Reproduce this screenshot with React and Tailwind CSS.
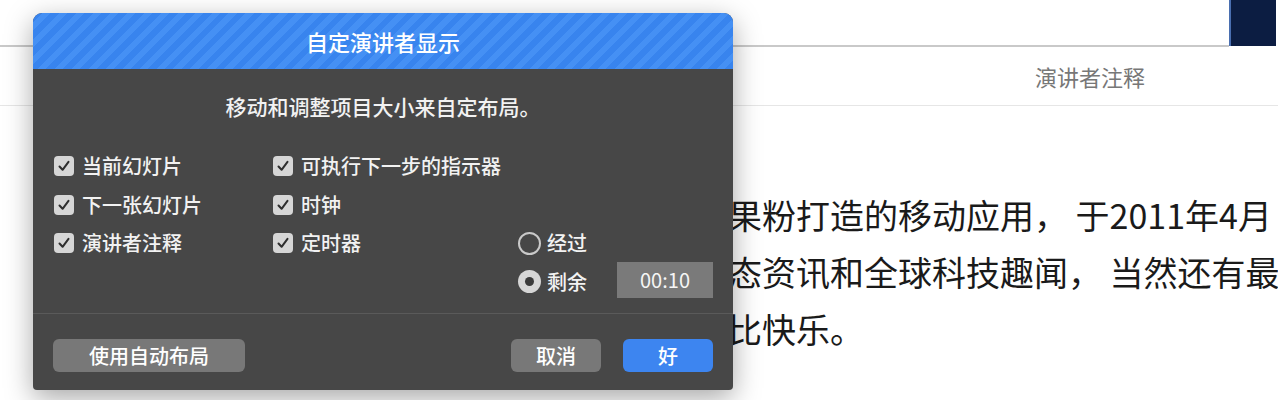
import React from 'react';

const font = { fontFamily: '"Noto Sans CJK SC", "Noto Sans", sans-serif' };

const CheckBox = ({ label }) => (
  <div className="flex items-center gap-[8px]">
    <span className="w-[20px] h-[20px] rounded-[4px] bg-[#d6d6d6] flex items-center justify-center">
      <svg width="14" height="14" viewBox="0 0 14 14">
        <path d="M2.5 7.5 L5.6 10.8 L11.5 2.8" fill="none" stroke="#2e2e2e" strokeWidth="2" strokeLinecap="round" strokeLinejoin="round" />
      </svg>
    </span>
    <span className="text-[20px] font-medium text-[#f2f2f2]">{label}</span>
  </div>
);

const Radio = ({ label, checked }) => (
  <div className="flex items-center gap-[6px]">
    {checked ? (
      <span className="w-[23px] h-[23px] rounded-full bg-[#d6d6d6] flex items-center justify-center">
        <span className="w-[9px] h-[9px] rounded-full bg-[#3a3a3a]" />
      </span>
    ) : (
      <span className="w-[23px] h-[23px] rounded-full border-2 border-[#c9c9c9]" />
    )}
    <span className="text-[20px] font-medium text-[#f2f2f2]">{label}</span>
  </div>
);

export default function App() {
  return (
    <div className="relative w-[1278px] h-[400px] bg-white overflow-hidden" style={font}>
      {/* page behind the dialog */}
      <div className="flex h-[47px]">
        <div className="flex-1 border-b-2 border-[#c9c9c9]" />
        <div className="w-[47px] h-[46px] bg-[#0c1d42] border-l-2 border-[#4a6fb0] mr-[2px]" />
      </div>
      <div className="h-[59px] border-b border-[#e6e6e6] flex items-center">
        <span className="ml-[1035px] text-[22px] text-[#777777]">演讲者注释</span>
      </div>
      <div className="pt-[80px] pl-[728px] text-[34px] leading-[57px] text-[#1a1a1a] whitespace-nowrap">
        <p>果粉打造的移动应用， 于2011年4月</p>
        <p>态资讯和全球科技趣闻， 当然还有最</p>
        <p>比快乐。</p>
      </div>

      {/* dialog */}
      <div className="absolute left-[33px] top-[13px] w-[700px] h-[377px] rounded-t-[9px] rounded-b-[4px] overflow-hidden bg-[#474747] shadow-[0_8px_28px_rgba(0,0,0,0.35)] flex flex-col">
        <div className="h-[56px] flex items-center justify-center bg-[repeating-linear-gradient(-45deg,#3884ee_0px,#3884ee_6px,#4590f4_6px,#4590f4_12px)]">
          <span className="text-[22px] font-medium text-white">自定演讲者显示</span>
        </div>
        <div className="pt-[24px] text-center text-[21px] font-medium text-[#f2f2f2] leading-[26px]">
          移动和调整项目大小来自定布局。
        </div>
        <div className="mt-[28px] pl-[21px] grid grid-cols-[219px_245px_1fr] grid-rows-[repeat(4,38.5px)] items-center">
          <CheckBox label="当前幻灯片" />
          <CheckBox label="可执行下一步的指示器" />
          <div />
          <CheckBox label="下一张幻灯片" />
          <CheckBox label="时钟" />
          <div />
          <CheckBox label="演讲者注释" />
          <CheckBox label="定时器" />
          <Radio label="经过" />
          <div />
          <div />
          <div className="flex items-center">
            <Radio label="剩余" checked />
            <div className="ml-[30px] w-[96px] h-[36px] mb-[4px] bg-[#7a7a7a] flex items-center justify-center text-[20px] text-[#f5f5f5]">
              00:10
            </div>
          </div>
        </div>
        <div className="mt-[12px] border-t border-[#5a5a5a]" />
        <div className="mt-[25px] px-[20px] flex items-center">
          <button className="w-[192px] h-[33px] rounded-[6px] bg-[#787878] text-[20px] font-medium text-white">
            使用自动布局
          </button>
          <div className="flex-1" />
          <button className="w-[90px] h-[33px] rounded-[6px] bg-[#787878] text-[20px] font-medium text-white">
            取消
          </button>
          <button className="ml-[22px] w-[90px] h-[33px] rounded-[6px] bg-[#3d85f0] text-[20px] font-medium text-white">
            好
          </button>
        </div>
      </div>
    </div>
  );
}
